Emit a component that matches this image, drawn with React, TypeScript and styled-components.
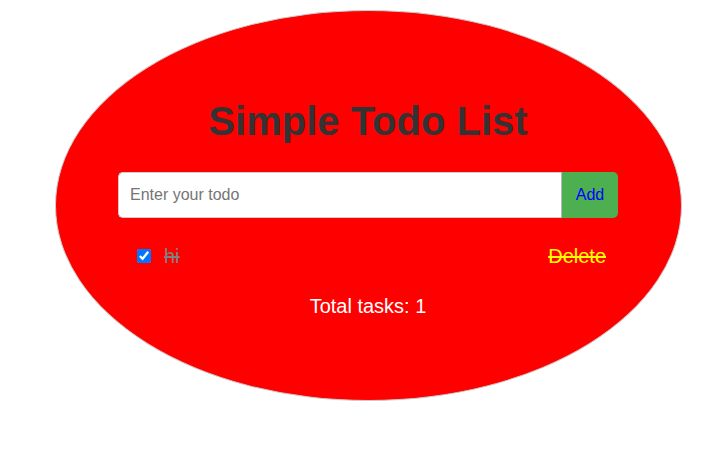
import React, { useState } from "react";
import styled, { createGlobalStyle } from "styled-components";

const Global = createGlobalStyle`
  html, body { margin: 0; padding: 0; background: #fff; }
  body { font-family: "Liberation Sans", Arial, sans-serif; }
`;

const Page = styled.div`
  padding: 10px 0 0 55px;
`;

const Oval = styled.div`
  box-sizing: border-box;
  width: 627px;
  height: 391px;
  border: 1px solid #cccccc;
  border-radius: 50%;
  background: #ff0000;
  display: flex;
  flex-direction: column;
  align-items: center;
  padding: 87px 1px 0 0;
`;

const Title = styled.h1`
  margin: 0;
  font-size: 40px;
  line-height: 46px;
  font-weight: bold;
  color: #333333;
`;

const Form = styled.form`
  display: flex;
  width: 500px;
  height: 46px;
  margin-top: 28px;
`;

const Input = styled.input`
  box-sizing: border-box;
  flex: 1;
  height: 46px;
  padding: 0 11px;
  border: 1px solid #cccccc;
  border-right: none;
  border-radius: 5px 0 0 5px;
  font-family: "Liberation Sans", Arial, sans-serif;
  font-size: 16px;
  outline: none;
  &::placeholder { color: #757575; }
`;

const AddButton = styled.button`
  box-sizing: border-box;
  width: 57px;
  height: 46px;
  border: none;
  border-left: 1px solid #b8b8b8;
  border-radius: 0 5px 5px 0;
  background: #4caf50;
  color: #0000ff;
  font-family: "Liberation Sans", Arial, sans-serif;
  font-size: 16px;
  padding: 0;
`;

const List = styled.ul`
  list-style: none;
  margin: 23px 0 0;
  padding: 0;
  width: 500px;
`;

const Item = styled.li<{ $done: boolean }>`
  display: flex;
  align-items: center;
  height: 30px;
  padding: 0 12px 0 15px;
  font-size: 20px;
  line-height: 30px;
  color: ${(p) => (p.$done ? "#808080" : "#ffffff")};
  text-decoration: ${(p) => (p.$done ? "line-through" : "none")};
`;

const Check = styled.input`
  width: 14px;
  height: 14px;
  margin: 3px 3px 3px 4px;
`;

const ItemText = styled.span`
  margin-left: 10px;
  flex: 1;
`;

const DeleteButton = styled.button`
  background: transparent;
  border: none;
  padding: 0;
  color: #ffff00;
  font-family: "Liberation Sans", Arial, sans-serif;
  font-size: 20px;
  line-height: 30px;
  text-decoration: inherit;
`;

const Total = styled.p`
  margin: 20px 0 0;
  font-size: 20px;
  line-height: 30px;
  color: #ffffff;
`;

export default function App() {
  const [todos, setTodos] = useState([{ id: 1, text: "hi", done: true }]);
  return (
    <Page>
      <Global />
      <Oval>
        <Title>Simple Todo List</Title>
        <Form onSubmit={(e) => e.preventDefault()}>
          <Input placeholder="Enter your todo" />
          <AddButton type="submit">Add</AddButton>
        </Form>
        <List>
          {todos.map((t) => (
            <Item key={t.id} $done={t.done}>
              <Check
                type="checkbox"
                checked={t.done}
                onChange={() =>
                  setTodos(todos.map((x) => (x.id === t.id ? { ...x, done: !x.done } : x)))
                }
              />
              <ItemText>{t.text}</ItemText>
              <DeleteButton onClick={() => setTodos(todos.filter((x) => x.id !== t.id))}>
                Delete
              </DeleteButton>
            </Item>
          ))}
        </List>
        <Total>Total tasks: {todos.length}</Total>
      </Oval>
    </Page>
  );
}
